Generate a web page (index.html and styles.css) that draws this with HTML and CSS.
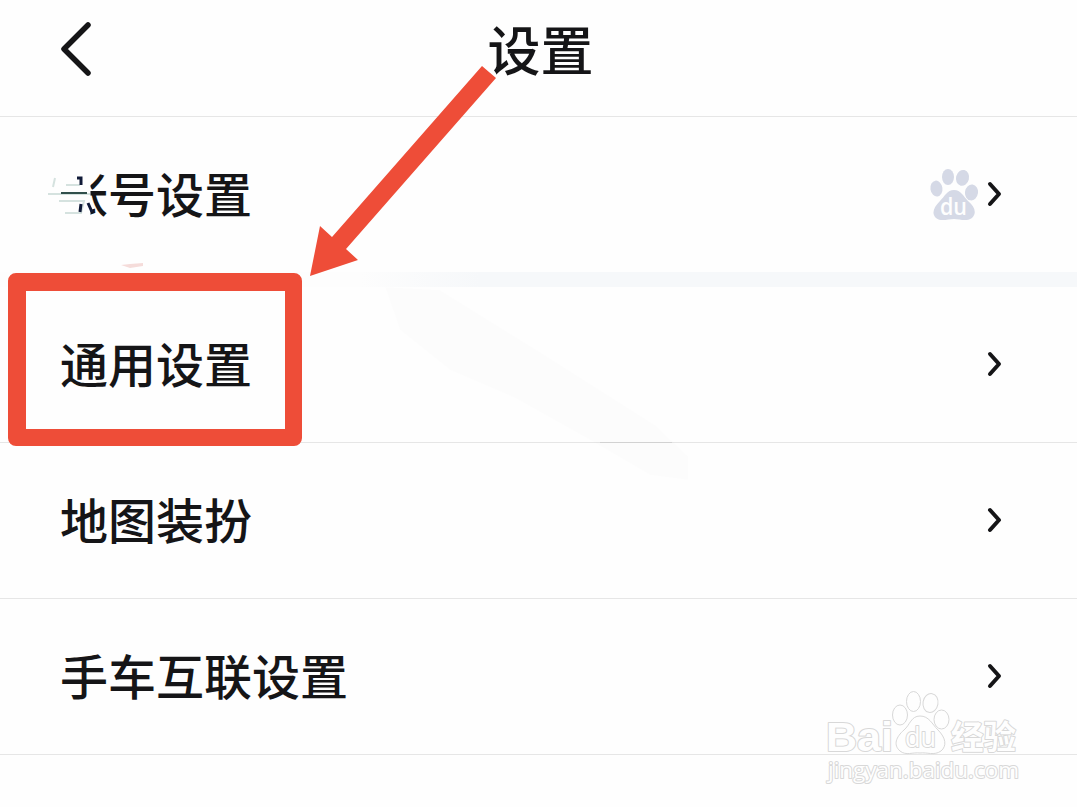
FILE: index.html
```html
<!DOCTYPE html>
<html lang="zh-CN">
<head>
  <meta charset="UTF-8">
  <title>设置</title>
  <meta name="viewport" content="width=device-width, initial-scale=1.0">
  <link rel="stylesheet" href="styles.css">
</head>
<body>

<header>
  <svg class="back" viewBox="0 0 40 64" width="40" height="64">
    <path d="M32 9 L8 33 L32 57"/>
  </svg>
  <h1>设置</h1>
</header>

<div class="list">
  <div class="row account">
    <span class="label">帐号设置
      <svg class="smudge" viewBox="0 0 60 64" width="60" height="64">
        <rect class="cover" x="8" y="4" width="36.500" height="54"/>
        <path class="fade" d="M9 15 L7 24 M20 22 H34 M2 31 H44 M13 38 H38 L35 50 H19"/>
        <path class="dark" d="M15 30 H41"/>
        <path class="navy" d="M31 15 H35 V22 M35 41 L34 49 M42 40 L46 49"/>
      </svg>
    </span>
    <svg class="paw" viewBox="0 0 50 54" width="50" height="54">
      <ellipse cx="7.500" cy="21.500" rx="6" ry="8" transform="rotate(-8 8 22)"/>
      <ellipse cx="19" cy="10" rx="6" ry="8"/>
      <ellipse cx="33.500" cy="11" rx="6.500" ry="8" transform="rotate(14 34 11)"/>
      <ellipse cx="42.500" cy="25.500" rx="6.500" ry="8" transform="rotate(8 43 25.500)"/>
      <path d="M25 23 C32 23 34 29 39 34 C46 40 48 46 43 51 C37 55 31 52 25 52 C19 52 12 55 7 51 C2 46 5 40 11 34 C16 29 18 23 25 23 Z"/>
      <text x="11" y="48" textLength="27" lengthAdjust="spacingAndGlyphs">du</text>
    </svg>
    <svg class="arrow" viewBox="0 0 16 30" width="16" height="30"><path d="M3 5 L12 15 L3 25"/></svg>
  </div>
  <div class="gap"></div>
  <div class="row">
    <span class="label">通用设置</span>
    <svg class="arrow" viewBox="0 0 16 30" width="16" height="30"><path d="M3 5 L12 15 L3 25"/></svg>
  </div>
  <div class="row">
    <span class="label">地图装扮</span>
    <svg class="arrow" viewBox="0 0 16 30" width="16" height="30"><path d="M3 5 L12 15 L3 25"/></svg>
  </div>
  <div class="row">
    <span class="label">手车互联设置</span>
    <svg class="arrow" viewBox="0 0 16 30" width="16" height="30"><path d="M3 5 L12 15 L3 25"/></svg>
  </div>
</div>

<!-- 标注 -->
<svg class="shade" viewBox="0 0 1077 807" width="1077" height="807">
  <path d="M385 287 L440 290 L540 352 L655 425 L688 456 L688 480 L650 475 L590 440 L515 398 L450 370 L400 330 Z"/>
  <path class="line" d="M600 442.500 H672"/>
  <path class="pink" d="M121 265 L130 268 L143 266 L143 263 L130 264 Z"/>
</svg>
<div class="mark-box"></div>
<svg class="mark-arrow" viewBox="0 0 190 214" width="190" height="214">
  <polygon points="174,4 188,16 38,187 50,198 2,214 12,164 24,175"/>
</svg>

<!-- 水印 -->
<svg class="watermark" viewBox="0 0 210 110" width="210" height="110">
  <text class="bai" x="4" y="62" textLength="67" lengthAdjust="spacingAndGlyphs">Bai</text>
  <ellipse cx="78" cy="26" rx="7.500" ry="10"/>
  <ellipse cx="91.500" cy="12.500" rx="7" ry="10"/>
  <ellipse cx="108.500" cy="14" rx="7.500" ry="9.500" transform="rotate(10 108.500 14)"/>
  <ellipse cx="119.500" cy="30.500" rx="7.500" ry="9.500"/>
  <path d="M98 27 C107 27 110 35 116 41 C124 49 125 57 119 62 C112 67 105 63 98 64 C91 63 84 67 78 62 C71 56 74 48 82 41 C88 36 89 27 98 27 Z"/>
  <text class="du" x="83" y="58" textLength="31" lengthAdjust="spacingAndGlyphs">du</text>
  <text class="jy" x="129" y="60" textLength="65" lengthAdjust="spacingAndGlyphs">经验</text>
  <text class="url" x="6" y="89" textLength="191" lengthAdjust="spacingAndGlyphs">jingyan.baidu.com</text>
</svg>

</body>
</html>
```

FILE: styles.css
```css
body {
  margin: 0;
  position: relative;
  height: 807px;
  overflow: hidden;
  font-family: "Noto Sans CJK SC", sans-serif;
  background: #fefefe;
  color: #151517;
}

header {
  position: relative;
  height: 116px;
  border-bottom: 1px solid #e6e6e6;
}

h1 {
  margin: 0;
  padding-left: 4px;
  font-size: 53px;
  font-weight: 500;
  line-height: 97px;
  text-align: center;
}

.back {
  position: absolute;
  left: 56px;
  top: 16px;
}

.back path,
.arrow path {
  fill: none;
  stroke: #151517;
  stroke-width: 5.5;
  stroke-linecap: round;
  stroke-linejoin: round;
}

.arrow path {
  stroke-width: 4;
}

.row {
  display: flex;
  align-items: center;
  height: 153px;
  padding: 0 74px 2px 60px;
  border-bottom: 1px solid #e6e6e6;
}

.account {
  border-bottom: none;
}

.label {
  position: relative;
  flex: 1;
  padding-bottom: 4px;
  font-size: 48px;
  font-weight: 500;
  line-height: 70px;
}

.gap {
  height: 15px;
  background: linear-gradient(to right, #fdfdfd 360px, #f6f8fa 480px);
}

.paw {
  margin-right: 8px;
  fill: #d5d9e6;
}

.paw text {
  fill: #fefefe;
  font: 600 23px "Open Sans", sans-serif;
}

.smudge {
  position: absolute;
  left: -14px;
  top: 6px;
}

.smudge path {
  fill: none;
}

.smudge .cover {
  fill: #fefefe;
}

.smudge .fade {
  stroke: #d5e2df;
  stroke-width: 2;
}

.smudge .dark {
  stroke: #31504c;
  stroke-width: 2;
}

.smudge .navy {
  stroke: #101a38;
  stroke-width: 3;
}

.shade {
  position: absolute;
  left: 0;
  top: 0;
  fill: rgba(0, 0, 0, 0.008);
}

.shade .line {
  stroke: #d2d2d2;
}

.shade .pink {
  fill: #f5dcda;
}

.mark-box {
  position: absolute;
  left: 8px;
  top: 273px;
  width: 259px;
  height: 138px;
  border: 17px solid #ee4d38;
  border-top-width: 18px;
  border-left-width: 18px;
  border-radius: 8px;
}

.mark-arrow {
  position: absolute;
  left: 308px;
  top: 62px;
  fill: #ee4d38;
}

.watermark {
  position: absolute;
  left: 822px;
  top: 689px;
  fill: #fefefe;
  stroke: #d8d8d8;
  stroke-width: 1;
}

.watermark text {
  stroke-width: 2;
  stroke-linejoin: round;
  paint-order: stroke;
}

.bai {
  font: bold 41px "Liberation Sans", sans-serif;
}

.du {
  font: 27px "Open Sans", sans-serif;
}

.jy {
  font: bold 33px "Noto Sans CJK SC", sans-serif;
}

.url {
  font: 22px "Open Sans", sans-serif;
}
```
